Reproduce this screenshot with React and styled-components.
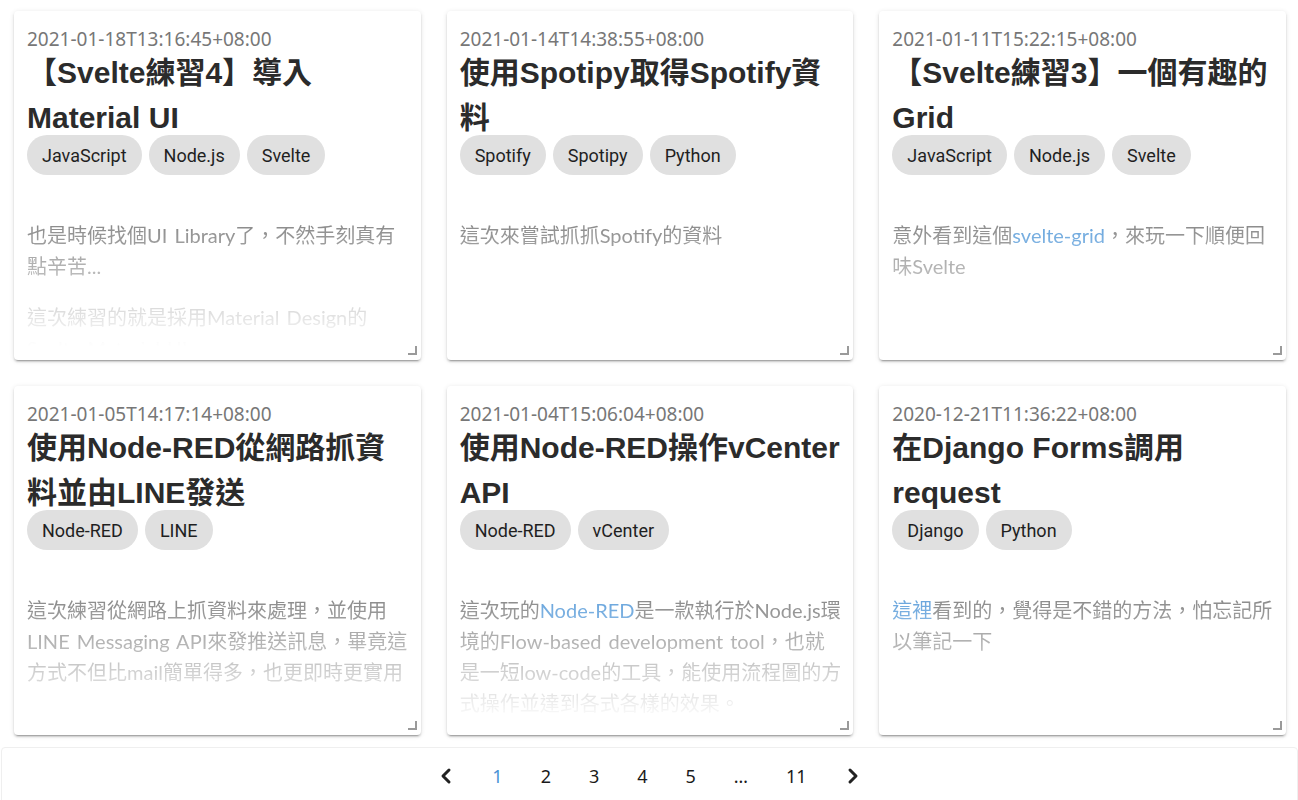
import React from "react";
import styled, { createGlobalStyle } from "styled-components";
import { ChevronLeft, ChevronRight } from "lucide-react";

const GlobalStyle = createGlobalStyle`
  html, body {
    margin: 0;
    padding: 0;
    background: #fff;
    font-family: "Noto Sans", "Noto Sans CJK TC", sans-serif;
  }
`;

const Page = styled.div`
  width: 1298px;
  height: 800px;
  overflow: hidden;
  box-sizing: border-box;
`;

const Grid = styled.div`
  display: grid;
  grid-template-columns: repeat(3, 1fr);
  column-gap: 26px;
  row-gap: 26px;
  padding: 11px 12px 0 14px;
`;

const Card = styled.article`
  position: relative;
  height: 349px;
  box-sizing: border-box;
  padding: 16px 11px 14px 13px;
  background: #fff;
  border-radius: 4px;
  box-shadow: 0px 3px 1px -2px rgba(0, 0, 0, 0.2),
    0px 2px 2px 0px rgba(0, 0, 0, 0.14), 0px 1px 5px 0px rgba(0, 0, 0, 0.12);
  display: flex;
  flex-direction: column;
  overflow: hidden;

  /* resize grip in the corner */
  &::after {
    content: "";
    position: absolute;
    right: 4px;
    bottom: 5px;
    width: 7px;
    height: 7px;
    border-right: 2px solid #9a9a9a;
    border-bottom: 2px solid #9a9a9a;
  }
`;

const DateLine = styled.div`
  font-size: 19px;
  line-height: 24px;
  margin-bottom: -1px;
  color: #777;
`;

const Title = styled.h2`
  margin: 0;
  font-family: "Liberation Sans", "Noto Sans CJK TC", sans-serif;
  font-size: 30px;
  line-height: 45px;
  font-weight: 700;
  color: #2b2b2b;
`;

const Tags = styled.div`
  display: flex;
  flex-wrap: wrap;
  gap: 7px;
  margin-top: -5px;
`;

const Chip = styled.span`
  display: inline-flex;
  align-items: center;
  height: 40px;
  padding: 0 15px;
  border-radius: 20px;
  background: #e0e0e0;
  color: #1f1f1f;
  font-family: Roboto, "Noto Sans", sans-serif;
  font-size: 18px;
`;

const Summary = styled.div`
  flex: 1;
  min-height: 0;
  overflow: hidden;
  margin-top: 25px;
  color: #747474;
  font-family: Lato, "Noto Sans CJK TC", sans-serif;
  font-size: 20px;
  line-height: 31px;
  word-spacing: 2px;
  -webkit-mask-image: linear-gradient(to bottom, #000 0%, rgba(0, 0, 0, 0) 100%);
  mask-image: linear-gradient(to bottom, #000 0%, rgba(0, 0, 0, 0) 100%);

  p {
    margin: 20px 0;
  }
  a {
    color: #4a93d6;
    text-decoration: none;
  }
`;

const Pager = styled.nav`
  margin: 12px 0 0 1px;
  height: 80px;
  border: 1px solid #efefef;
  border-radius: 4px;
  display: flex;
  justify-content: center;
  align-items: flex-start;
  padding-top: 13px;
  box-sizing: border-box;
`;

const PageItem = styled.span`
  display: inline-flex;
  align-items: center;
  justify-content: center;
  height: 30px;
  padding: 0 19px;
  font-size: 18px;
  color: ${(p) => (p.$active ? "#4a93d6" : "#1a1a1a")};
`;

const Arrow = styled(PageItem)`
  padding: 0 15px;
  color: #222;
`;

const posts = [
  {
    date: "2021-01-18T13:16:45+08:00",
    title: "【Svelte練習4】導入 Material UI",
    tags: ["JavaScript", "Node.js", "Svelte"],
    body: [
      ["也是時候找個UI Library了，不然手刻真有點辛苦..."],
      ["這次練習的就是採用Material Design的Svelte Material UI"],
    ],
  },
  {
    date: "2021-01-14T14:38:55+08:00",
    title: "使用Spotipy取得Spotify資料",
    tags: ["Spotify", "Spotipy", "Python"],
    body: [["這次來嘗試抓抓Spotify的資料"]],
  },
  {
    date: "2021-01-11T15:22:15+08:00",
    title: "【Svelte練習3】一個有趣的Grid",
    tags: ["JavaScript", "Node.js", "Svelte"],
    body: [["意外看到這個", { link: "svelte-grid" }, "，來玩一下順便回味Svelte"]],
  },
  {
    date: "2021-01-05T14:17:14+08:00",
    title: "使用Node-RED從網路抓資料並由LINE發送",
    tags: ["Node-RED", "LINE"],
    body: [
      [
        "這次練習從網路上抓資料來處理，並使用LINE Messaging API來發推送訊息，畢竟這方式不但比mail簡單得多，也更即時更實用",
      ],
    ],
  },
  {
    date: "2021-01-04T15:06:04+08:00",
    title: "使用Node-RED操作vCenter API",
    tags: ["Node-RED", "vCenter"],
    body: [
      [
        "這次玩的",
        { link: "Node-RED" },
        "是一款執行於Node.js環境的Flow-based development tool，也就是一短low-code的工具，能使用流程圖的方式操作並達到各式各樣的效果。",
      ],
    ],
  },
  {
    date: "2020-12-21T11:36:22+08:00",
    title: "在Django Forms調用request",
    tags: ["Django", "Python"],
    body: [[{ link: "這裡" }, "看到的，覺得是不錯的方法，怕忘記所以筆記一下"]],
  },
];

function PostCard({ post }) {
  return (
    <Card>
      <DateLine>{post.date}</DateLine>
      <Title>{post.title}</Title>
      <Tags>
        {post.tags.map((t) => (
          <Chip key={t}>{t}</Chip>
        ))}
      </Tags>
      <Summary>
        {post.body.map((para, i) => (
          <p key={i}>
            {para.map((part, j) =>
              typeof part === "string" ? (
                <React.Fragment key={j}>{part}</React.Fragment>
              ) : (
                <a key={j} href="#">
                  {part.link}
                </a>
              )
            )}
          </p>
        ))}
      </Summary>
    </Card>
  );
}

export default function App() {
  return (
    <Page>
      <GlobalStyle />
      <Grid>
        {posts.map((p) => (
          <PostCard key={p.date} post={p} />
        ))}
      </Grid>
      <Pager>
        <Arrow>
          <ChevronLeft size={24} strokeWidth={3} />
        </Arrow>
        <PageItem $active>1</PageItem>
        <PageItem>2</PageItem>
        <PageItem>3</PageItem>
        <PageItem>4</PageItem>
        <PageItem>5</PageItem>
        <PageItem>…</PageItem>
        <PageItem>11</PageItem>
        <Arrow>
          <ChevronRight size={24} strokeWidth={3} />
        </Arrow>
      </Pager>
    </Page>
  );
}
